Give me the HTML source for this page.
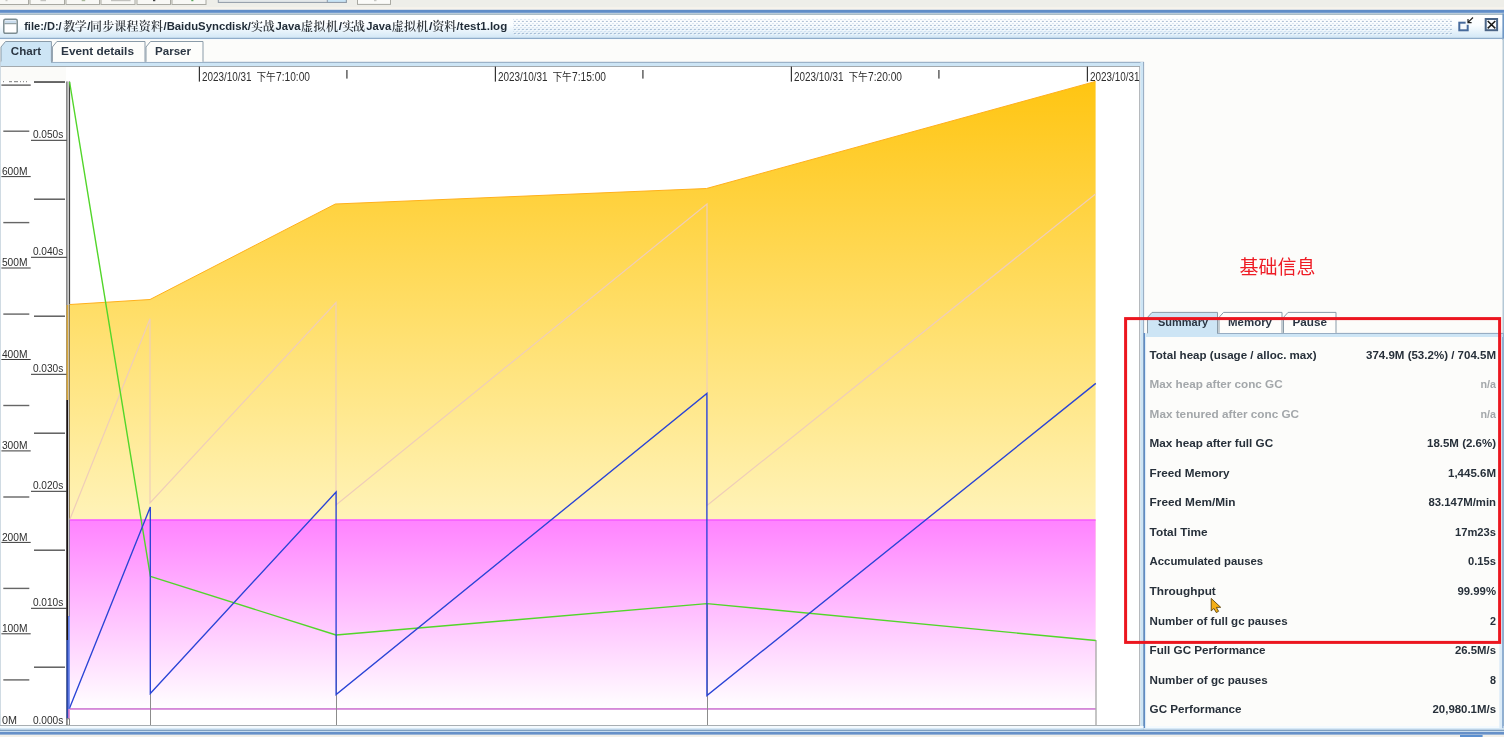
<!DOCTYPE html>
<html lang="zh"><head><meta charset="utf-8"><title>GCViewer - test1.log</title>
<style>
html,body{margin:0;padding:0;background:#fcfcfa;overflow:hidden}
body{width:1504px;height:737px;position:relative;font-family:"Liberation Sans","Noto Sans CJK SC",sans-serif}
svg{position:absolute;left:0;top:0;display:block;will-change:transform}
</style></head><body>

<svg width="1504" height="737" viewBox="0 0 1504 737">
<defs>
<linearGradient id="gTitle" x1="0" y1="0" x2="0" y2="1"><stop offset="0" stop-color="#ffffff"/><stop offset="0.45" stop-color="#fafdff"/><stop offset="1" stop-color="#d2e7f6"/></linearGradient>
<linearGradient id="gOrange" gradientUnits="userSpaceOnUse" x1="0" y1="81" x2="0" y2="709"><stop offset="0" stop-color="#ffc512"/><stop offset="0.352" stop-color="#ffdd64"/><stop offset="0.696" stop-color="#fff3b8"/><stop offset="1" stop-color="#ffffff"/></linearGradient>
<linearGradient id="gPink" gradientUnits="userSpaceOnUse" x1="0" y1="519" x2="0" y2="709"><stop offset="0" stop-color="#ff82ff"/><stop offset="1" stop-color="#ffffff"/></linearGradient>
<pattern id="bumps" x="511.5" y="18" width="4" height="4" patternUnits="userSpaceOnUse">
<rect x="0" y="0" width="1" height="1" fill="#ffffff"/><rect x="0.9" y="0.9" width="1.2" height="1.2" fill="#c2d3e6"/>
<rect x="2" y="2" width="1" height="1" fill="#ffffff"/><rect x="2.85" y="2.85" width="1.3" height="1.3" fill="#7a96b8"/>
</pattern>
</defs>
<rect x="0" y="0" width="1504" height="737" fill="#fcfcfa"/>
<rect x="0" y="0" width="1504" height="10" fill="#eeeee9"/>
<rect x="0" y="7.2" width="1504" height="2.6" fill="#f7f3ec"/>
<rect x="-6" y="-6" width="34.5" height="10.5" fill="#f8f8f5" stroke="#a9a9a2" stroke-width="1"/>
<rect x="30" y="-6" width="34.5" height="10.5" fill="#f8f8f5" stroke="#a9a9a2" stroke-width="1"/>
<rect x="66" y="-6" width="33.5" height="10.5" fill="#f8f8f5" stroke="#a9a9a2" stroke-width="1"/>
<rect x="101" y="-6" width="34" height="10.5" fill="#f8f8f5" stroke="#a9a9a2" stroke-width="1"/>
<rect x="137" y="-6" width="33.5" height="10.5" fill="#f8f8f5" stroke="#a9a9a2" stroke-width="1"/>
<rect x="172" y="-6" width="34" height="10.5" fill="#f8f8f5" stroke="#a9a9a2" stroke-width="1"/>
<rect x="218.3" y="-6" width="128" height="8.4" fill="#e4e8ea" stroke="#8f9aa6" stroke-width="1"/>
<rect x="327.3" y="-6" width="19" height="8.4" fill="#c8e4f6" stroke="#8f9aa6" stroke-width="1"/>
<rect x="357.5" y="-6" width="33" height="10.4" fill="#fbfbf9" stroke="#a9a9a2" stroke-width="1"/>
<rect x="5.5" y="0" width="2" height="1.2" fill="#c8c8c4"/>
<rect x="40.5" y="0" width="5.5" height="1.2" fill="#c4c4c0"/>
<rect x="81.7" y="0" width="3.5" height="1.2" fill="#a9b89a"/>
<rect x="111" y="0" width="19.6" height="1.2" fill="#c2c2be"/>
<rect x="153" y="0" width="2.3" height="1.2" fill="#444444"/>
<rect x="191.3" y="0" width="2.1" height="1.2" fill="#58a858"/>
<rect x="374" y="0" width="2.5" height="1.2" fill="#c8c8c4"/>
<rect x="0" y="9.8" width="1504" height="3.1" fill="#608dc8"/>
<rect x="0" y="12.9" width="1504" height="0.8" fill="#c4d8ea"/>
<rect x="0" y="13.6" width="1504" height="1.3" fill="#96acb8"/>
<rect x="0" y="14.9" width="1504" height="23" fill="url(#gTitle)"/>
<rect x="0" y="37.8" width="1504" height="1.1" fill="#7799bf"/>
<rect x="0" y="38.9" width="1504" height="1" fill="#f6fafd"/>
<rect x="513" y="18" width="939" height="17" fill="url(#bumps)"/>
<rect x="3.8" y="19.3" width="13.4" height="14" rx="1.5" fill="#ffffff" stroke="#7d8d92" stroke-width="1.5"/>
<rect x="5" y="20.5" width="11" height="2.6" fill="#c9dced"/>
<rect x="4.5" y="23.2" width="12" height="1" fill="#7d8d92"/>
<text y="30.3" font-size="11.8" font-weight="bold" fill="#1f2a36" font-family='"Liberation Sans", "Noto Serif CJK SC", sans-serif'><tspan x="24.2" y="30.3" textLength="37.5" lengthAdjust="spacingAndGlyphs">file:/D:/</tspan><tspan x="63.3" y="30.9" font-size="12" font-weight="600" fill="#30353b" textLength="23.4" lengthAdjust="spacing">教学</tspan><tspan x="87.2" y="30.3" textLength="3.2" lengthAdjust="spacingAndGlyphs">/</tspan><tspan x="89.9" y="30.9" font-size="12" font-weight="600" fill="#30353b" textLength="73.2" lengthAdjust="spacing">同步课程资料</tspan><tspan x="163.5" y="30.3" textLength="87.5" lengthAdjust="spacingAndGlyphs">/BaiduSyncdisk/</tspan><tspan x="251.0" y="30.9" font-size="12" font-weight="600" fill="#30353b" textLength="23.8" lengthAdjust="spacing">实战</tspan><tspan x="275.4" y="30.3" textLength="25.1" lengthAdjust="spacingAndGlyphs">Java</tspan><tspan x="301.0" y="30.9" font-size="12" font-weight="600" fill="#30353b" textLength="37.1" lengthAdjust="spacing">虚拟机</tspan><tspan x="338.7" y="30.3" textLength="3.3" lengthAdjust="spacingAndGlyphs">/</tspan><tspan x="342.3" y="30.9" font-size="12" font-weight="600" fill="#30353b" textLength="22.8" lengthAdjust="spacing">实战</tspan><tspan x="366.3" y="30.3" textLength="24.9" lengthAdjust="spacingAndGlyphs">Java</tspan><tspan x="391.8" y="30.9" font-size="12" font-weight="600" fill="#30353b" textLength="36.5" lengthAdjust="spacing">虚拟机</tspan><tspan x="429" y="30.3" textLength="3.5" lengthAdjust="spacingAndGlyphs">/</tspan><tspan x="432.2" y="30.9" font-size="12" font-weight="600" fill="#30353b" textLength="24.1" lengthAdjust="spacing">资料</tspan><tspan x="456.6" y="30.3" textLength="50.6" lengthAdjust="spacingAndGlyphs">/test1.log</tspan></text>
<rect x="1459.3" y="22.7" width="8.4" height="7.6" fill="#f4f9fd" stroke="#466a9c" stroke-width="2"/>
<rect x="1465.6" y="20.4" width="4.6" height="4.4" fill="#f2f8fc"/>
<path d="M1473 17.5 L1468.3 22.2 M1468 19 L1468 22.6 L1471.6 22.6" stroke="#222" stroke-width="1.2" fill="none"/>
<rect x="1485.7" y="19" width="11.4" height="11.2" fill="#f8fbfe" stroke="#4a6486" stroke-width="2"/>
<path d="M1487.7 21 L1495.3 28.4 M1495.3 21 L1487.7 28.4" stroke="#1a1a1a" stroke-width="1.5" fill="none"/>
<rect x="1502.4" y="13.5" width="1.6" height="25" fill="#6f98c6"/>
<rect x="1502" y="38.8" width="2" height="690" fill="#b4c8d6"/>
<rect x="0" y="62" width="1144" height="4" fill="#cde5f5"/>
<rect x="51" y="61.8" width="1093" height="1" fill="#8fa6bd"/>
<path d="M1 62.2 L1 47.0 L5.5 41.5 L51.4 41.5 L51.4 62.2 Z" fill="#cde5f5"/>
<path d="M1 62.2 L1 47.0 L5.5 41.5 L51.4 41.5 L51.4 62.2" fill="none" stroke="#8a9ba8" stroke-width="1"/>
<text x="10.8" y="54.5" font-size="11.6" font-weight="bold" fill="#2b3643" font-family='"Liberation Sans", "Noto Sans CJK SC", sans-serif' textLength="30.2" lengthAdjust="spacingAndGlyphs" >Chart</text>
<path d="M52.4 61.8 L52.4 47.0 L56.9 41.5 L145 41.5 L145 61.8 Z" fill="#fdfdfb"/>
<path d="M52.4 61.8 L52.4 47.0 L56.9 41.5 L145 41.5 L145 61.8" fill="none" stroke="#8a9ba8" stroke-width="1"/>
<text x="61" y="54.5" font-size="11.6" font-weight="bold" fill="#2b3643" font-family='"Liberation Sans", "Noto Sans CJK SC", sans-serif' textLength="73" lengthAdjust="spacingAndGlyphs" >Event details</text>
<path d="M146 61.8 L146 47.0 L150.5 41.5 L203 41.5 L203 61.8 Z" fill="#fdfdfb"/>
<path d="M146 61.8 L146 47.0 L150.5 41.5 L203 41.5 L203 61.8" fill="none" stroke="#8a9ba8" stroke-width="1"/>
<text x="155" y="54.5" font-size="11.6" font-weight="bold" fill="#2b3643" font-family='"Liberation Sans", "Noto Sans CJK SC", sans-serif' textLength="36" lengthAdjust="spacingAndGlyphs" >Parser</text>
<rect x="1.5" y="61" width="49.4" height="3" fill="#cde5f5"/>
<rect x="0" y="66" width="1140" height="660" fill="#ffffff"/>
<rect x="0" y="66" width="1140" height="1" fill="#a3a9ad"/>
<rect x="1139.2" y="66" width="1" height="660" fill="#a3a9ad"/>
<rect x="1140.5" y="62" width="3" height="668" fill="#cde5f5"/>
<rect x="1143.2" y="62" width="1" height="668" fill="#8aa0b8"/>
<rect x="0" y="62" width="0.8" height="668" fill="#c5d2dc"/>
<rect x="1" y="67" width="65" height="14" fill="#fbfbf9"/>
<text x="2" y="724" font-size="11.4" font-weight="normal" fill="#2e2e2e" font-family='"Liberation Sans", "Noto Sans CJK SC", sans-serif' textLength="15" lengthAdjust="spacingAndGlyphs" >0M</text>
<rect x="3.3" y="679.2" width="26" height="1.4" fill="#666"/>
<text x="1.9" y="631.9" font-size="11.4" font-weight="normal" fill="#2e2e2e" font-family='"Liberation Sans", "Noto Sans CJK SC", sans-serif' textLength="25.6" lengthAdjust="spacingAndGlyphs" >100M</text>
<rect x="1.4" y="633.3" width="29.3" height="1" fill="#3a3a3a"/>
<rect x="3.3" y="587.7" width="26" height="1.4" fill="#666"/>
<text x="1.9" y="540.5" font-size="11.4" font-weight="normal" fill="#2e2e2e" font-family='"Liberation Sans", "Noto Sans CJK SC", sans-serif' textLength="25.6" lengthAdjust="spacingAndGlyphs" >200M</text>
<rect x="1.4" y="541.9" width="29.3" height="1" fill="#3a3a3a"/>
<rect x="3.3" y="496.3" width="26" height="1.4" fill="#666"/>
<text x="1.9" y="449.0" font-size="11.4" font-weight="normal" fill="#2e2e2e" font-family='"Liberation Sans", "Noto Sans CJK SC", sans-serif' textLength="25.6" lengthAdjust="spacingAndGlyphs" >300M</text>
<rect x="1.4" y="450.4" width="29.3" height="1" fill="#3a3a3a"/>
<rect x="3.3" y="404.8" width="26" height="1.4" fill="#666"/>
<text x="1.9" y="357.6" font-size="11.4" font-weight="normal" fill="#2e2e2e" font-family='"Liberation Sans", "Noto Sans CJK SC", sans-serif' textLength="25.6" lengthAdjust="spacingAndGlyphs" >400M</text>
<rect x="1.4" y="359.0" width="29.3" height="1" fill="#3a3a3a"/>
<rect x="3.3" y="313.4" width="26" height="1.4" fill="#666"/>
<text x="1.9" y="266.1" font-size="11.4" font-weight="normal" fill="#2e2e2e" font-family='"Liberation Sans", "Noto Sans CJK SC", sans-serif' textLength="25.6" lengthAdjust="spacingAndGlyphs" >500M</text>
<rect x="1.4" y="267.5" width="29.3" height="1" fill="#3a3a3a"/>
<rect x="3.3" y="221.9" width="26" height="1.4" fill="#666"/>
<text x="1.9" y="174.7" font-size="11.4" font-weight="normal" fill="#2e2e2e" font-family='"Liberation Sans", "Noto Sans CJK SC", sans-serif' textLength="25.6" lengthAdjust="spacingAndGlyphs" >600M</text>
<rect x="1.4" y="176.1" width="29.3" height="1" fill="#3a3a3a"/>
<rect x="3.3" y="130.5" width="26" height="1.4" fill="#666"/>
<rect x="1.4" y="84.5" width="29.3" height="1.2" fill="#444"/>
<text x="32.9" y="724" font-size="11.4" font-weight="normal" fill="#2e2e2e" font-family='"Liberation Sans", "Noto Sans CJK SC", sans-serif' textLength="30.4" lengthAdjust="spacingAndGlyphs" >0.000s</text>
<rect x="34" y="666.5" width="31" height="1.4" fill="#555"/>
<text x="32.9" y="606.1" font-size="11.4" font-weight="normal" fill="#2e2e2e" font-family='"Liberation Sans", "Noto Sans CJK SC", sans-serif' textLength="30.4" lengthAdjust="spacingAndGlyphs" >0.010s</text>
<rect x="31" y="607.8" width="36" height="1" fill="#333"/>
<rect x="34" y="549.5" width="31" height="1.4" fill="#555"/>
<text x="32.9" y="489.1" font-size="11.4" font-weight="normal" fill="#2e2e2e" font-family='"Liberation Sans", "Noto Sans CJK SC", sans-serif' textLength="30.4" lengthAdjust="spacingAndGlyphs" >0.020s</text>
<rect x="31" y="490.8" width="36" height="1" fill="#333"/>
<rect x="34" y="432.5" width="31" height="1.4" fill="#555"/>
<text x="32.9" y="372.1" font-size="11.4" font-weight="normal" fill="#2e2e2e" font-family='"Liberation Sans", "Noto Sans CJK SC", sans-serif' textLength="30.4" lengthAdjust="spacingAndGlyphs" >0.030s</text>
<rect x="31" y="373.8" width="36" height="1" fill="#333"/>
<rect x="34" y="315.5" width="31" height="1.4" fill="#555"/>
<text x="32.9" y="255.1" font-size="11.4" font-weight="normal" fill="#2e2e2e" font-family='"Liberation Sans", "Noto Sans CJK SC", sans-serif' textLength="30.4" lengthAdjust="spacingAndGlyphs" >0.040s</text>
<rect x="31" y="256.8" width="36" height="1" fill="#333"/>
<rect x="34" y="198.5" width="31" height="1.4" fill="#555"/>
<text x="32.9" y="138.1" font-size="11.4" font-weight="normal" fill="#2e2e2e" font-family='"Liberation Sans", "Noto Sans CJK SC", sans-serif' textLength="30.4" lengthAdjust="spacingAndGlyphs" >0.050s</text>
<rect x="31" y="139.8" width="36" height="1" fill="#333"/>
<rect x="34" y="81.5" width="31" height="1.4" fill="#555"/>
<rect x="34" y="81.1" width="31" height="1.5" fill="#666"/>
<rect x="3" y="81.2" width="1" height="1" fill="#777"/>
<rect x="9" y="81.2" width="3" height="1" fill="#777"/>
<rect x="14" y="81.2" width="4" height="1" fill="#777"/>
<rect x="20" y="81.2" width="1" height="1" fill="#777"/>
<rect x="23" y="81.2" width="1" height="1" fill="#777"/>
<rect x="26" y="81.2" width="1" height="1" fill="#777"/>
<rect x="66.3" y="81.5" width="1.3" height="644" fill="#5a5a5a"/>
<rect x="67.6" y="81.5" width="1.4" height="644" fill="#c9c9c9"/>
<rect x="69" y="81.5" width="1.1" height="223" fill="#444"/>
<rect x="69" y="304.5" width="1.1" height="215" fill="#8f7d4e"/>
<rect x="69" y="519.5" width="1.1" height="97" fill="#8a7a9a"/>
<rect x="198.8" y="66.6" width="1.2" height="15" fill="#333"/>
<text y="80.6" font-size="12" fill="#2e2e2e" font-family='"Liberation Sans", "Noto Sans CJK SC", sans-serif'><tspan x="202.0" textLength="49.6" lengthAdjust="spacingAndGlyphs">2023/10/31</tspan><tspan x="256.4" font-size="11.4" textLength="19.4" lengthAdjust="spacingAndGlyphs">下午</tspan><tspan x="276.0" textLength="34" lengthAdjust="spacingAndGlyphs">7:10:00</tspan></text>
<rect x="346.2" y="70" width="1.4" height="8.6" fill="#555"/>
<rect x="494.79999999999995" y="66.6" width="1.2" height="15" fill="#333"/>
<text y="80.6" font-size="12" fill="#2e2e2e" font-family='"Liberation Sans", "Noto Sans CJK SC", sans-serif'><tspan x="498.0" textLength="49.6" lengthAdjust="spacingAndGlyphs">2023/10/31</tspan><tspan x="552.4" font-size="11.4" textLength="19.4" lengthAdjust="spacingAndGlyphs">下午</tspan><tspan x="572.0" textLength="34" lengthAdjust="spacingAndGlyphs">7:15:00</tspan></text>
<rect x="642.1999999999999" y="70" width="1.4" height="8.6" fill="#555"/>
<rect x="790.8" y="66.6" width="1.2" height="15" fill="#333"/>
<text y="80.6" font-size="12" fill="#2e2e2e" font-family='"Liberation Sans", "Noto Sans CJK SC", sans-serif'><tspan x="794.0" textLength="49.6" lengthAdjust="spacingAndGlyphs">2023/10/31</tspan><tspan x="848.4" font-size="11.4" textLength="19.4" lengthAdjust="spacingAndGlyphs">下午</tspan><tspan x="868.0" textLength="34" lengthAdjust="spacingAndGlyphs">7:20:00</tspan></text>
<rect x="938.1999999999999" y="70" width="1.4" height="8.6" fill="#555"/>
<rect x="1086.8000000000002" y="66.6" width="1.2" height="15" fill="#333"/>
<text y="80.6" font-size="12" fill="#2e2e2e" font-family='"Liberation Sans", "Noto Sans CJK SC", sans-serif'><tspan x="1090.0" textLength="49.6" lengthAdjust="spacingAndGlyphs">2023/10/31</tspan></text>
<path d="M70 304.5 L150 299.5 L335.3 204 L706.5 188.5 L1095.6 81.4 L1095.6 709 L70 709 Z" fill="url(#gOrange)"/>
<path d="M70 304.5 L150 299.5 L335.3 204 L706.5 188.5 L1095.6 81.4" fill="none" stroke="#ffb01c" stroke-width="1"/>
<rect x="70" y="519.4" width="1025.6" height="189.6" fill="url(#gPink)"/>
<rect x="70" y="519.4" width="1025.6" height="1.4" fill="#f65cff"/>
<rect x="70" y="708.3" width="1025.6" height="1.3" fill="#c458c8"/>
<path d="M70 519 L150 318.7 L150 503 L336 302.5 L336 505 L707 204 L707 505.5 L1095.5 194" fill="none" stroke="#efcdb9" stroke-width="1.2"/>
<rect x="150.0" y="577" width="1" height="148.5" fill="#8c8c8c"/>
<rect x="336.0" y="635" width="1" height="90.5" fill="#8c8c8c"/>
<rect x="707.0" y="603" width="1" height="122.5" fill="#8c8c8c"/>
<rect x="1095.5" y="640" width="1" height="85.5" fill="#8c8c8c"/>
<path d="M69.6 82 L150.4 576.4 L336 635 L707 603.6 L1095.8 640.5" fill="none" stroke="#52d62a" stroke-width="1.4" stroke-linejoin="round"/>
<path d="M69.4 708.5 L150.3 507 L150.3 693.4 L336.1 492 L336.1 694.6 L706.9 393.4 L706.9 695.5 L1095.8 383.4" fill="none" stroke="#2a44d6" stroke-width="1.35"/>
<rect x="66.5" y="305" width="1.7" height="95" fill="#d9a83c"/>
<rect x="66.5" y="400" width="1.5" height="240" fill="#1a1212"/>
<rect x="66.5" y="640" width="1.7" height="78.5" fill="#2a4ab0"/>
<rect x="68.2" y="616" width="1.5" height="93" fill="#4a68e8"/>
<rect x="68.2" y="709" width="1.5" height="9.5" fill="#cc6ccc"/>
<rect x="67.2" y="718.8" width="2.3" height="6.4" fill="#ffffff" stroke="#777" stroke-width="0.9"/>
<rect x="0" y="725" width="1140" height="1" fill="#a8aeb2"/>
<rect x="0" y="726" width="1504" height="2.3" fill="#f4fafe"/>
<rect x="0" y="728.3" width="1504" height="1.4" fill="#c8e2f4"/>
<rect x="0" y="729.7" width="1504" height="1.3" fill="#7f9fc0"/>
<rect x="0" y="731" width="1504" height="0.8" fill="#d8eaf8"/>
<rect x="0" y="731.8" width="1504" height="3" fill="#6690c8"/>
<rect x="0" y="734.8" width="1504" height="2.2" fill="#f1efe9"/>
<rect x="1460" y="735" width="22.6" height="2" fill="#5a8fd0"/>
<rect x="1144.5" y="39.9" width="358" height="686" fill="#fcfcfa"/>
<rect x="1143.6" y="333" width="1.5" height="395" fill="#5f8cc4"/>
<rect x="1145.1" y="333" width="1" height="395" fill="#dcecf8"/>
<rect x="1499.3" y="333" width="3.2" height="395" fill="#dcecf8"/>
<rect x="1502.4" y="333" width="1" height="395" fill="#5f8cc4"/>
<text x="1239.5" y="273.5" font-size="19" font-weight="normal" fill="#ee1c25" font-family='"Liberation Sans", "Noto Sans CJK SC", sans-serif' textLength="76" lengthAdjust="spacingAndGlyphs" >基础信息</text>
<rect x="1145.8" y="333.4" width="357" height="3.6" fill="#cde5f5"/>
<rect x="1217" y="332.9" width="286" height="1" fill="#8fa6bd"/>
<path d="M1147.5 333.4 L1147.5 317.4 L1152.0 312.4 L1217.5 312.4 L1217.5 333.4 Z" fill="#cde5f5"/>
<path d="M1147.5 333.4 L1147.5 317.4 L1152.0 312.4 L1217.5 312.4 L1217.5 333.4" fill="none" stroke="#8a9ba8" stroke-width="1"/>
<text x="1158" y="326.0" font-size="11.6" font-weight="bold" fill="#2b3643" font-family='"Liberation Sans", "Noto Sans CJK SC", sans-serif' textLength="50" lengthAdjust="spacingAndGlyphs" >Summary</text>
<path d="M1219 332.9 L1219 317.4 L1223.5 312.4 L1282 312.4 L1282 332.9 Z" fill="#fdfdfb"/>
<path d="M1219 332.9 L1219 317.4 L1223.5 312.4 L1282 312.4 L1282 332.9" fill="none" stroke="#8a9ba8" stroke-width="1"/>
<text x="1228" y="326.0" font-size="11.6" font-weight="bold" fill="#2b3643" font-family='"Liberation Sans", "Noto Sans CJK SC", sans-serif' textLength="44" lengthAdjust="spacingAndGlyphs" >Memory</text>
<path d="M1283.5 332.9 L1283.5 317.4 L1288.0 312.4 L1336 312.4 L1336 332.9 Z" fill="#fdfdfb"/>
<path d="M1283.5 332.9 L1283.5 317.4 L1288.0 312.4 L1336 312.4 L1336 332.9" fill="none" stroke="#8a9ba8" stroke-width="1"/>
<text x="1292.5" y="326.0" font-size="11.6" font-weight="bold" fill="#2b3643" font-family='"Liberation Sans", "Noto Sans CJK SC", sans-serif' textLength="34.5" lengthAdjust="spacingAndGlyphs" >Pause</text>
<rect x="1148" y="332.4" width="69" height="3" fill="#cde5f5"/>
<text x="1149.6" y="358.6" font-size="11.5" font-weight="bold" fill="#27303a" font-family='"Liberation Sans", "Noto Sans CJK SC", sans-serif' textLength="167" lengthAdjust="spacingAndGlyphs" >Total heap (usage / alloc. max)</text>
<text x="1496" y="358.6" font-size="11.5" font-weight="bold" fill="#27303a" font-family='"Liberation Sans", "Noto Sans CJK SC", sans-serif' text-anchor="end" textLength="130" lengthAdjust="spacingAndGlyphs" >374.9M (53.2%) / 704.5M</text>
<text x="1149.6" y="388.1" font-size="11.5" font-weight="bold" fill="#a3a7aa" font-family='"Liberation Sans", "Noto Sans CJK SC", sans-serif' textLength="133" lengthAdjust="spacingAndGlyphs" >Max heap after conc GC</text>
<text x="1496" y="388.1" font-size="11.5" font-weight="bold" fill="#a3a7aa" font-family='"Liberation Sans", "Noto Sans CJK SC", sans-serif' text-anchor="end" textLength="15.5" lengthAdjust="spacingAndGlyphs" >n/a</text>
<text x="1149.6" y="417.7" font-size="11.5" font-weight="bold" fill="#a3a7aa" font-family='"Liberation Sans", "Noto Sans CJK SC", sans-serif' textLength="149.5" lengthAdjust="spacingAndGlyphs" >Max tenured after conc GC</text>
<text x="1496" y="417.7" font-size="11.5" font-weight="bold" fill="#a3a7aa" font-family='"Liberation Sans", "Noto Sans CJK SC", sans-serif' text-anchor="end" textLength="15.5" lengthAdjust="spacingAndGlyphs" >n/a</text>
<text x="1149.6" y="447.2" font-size="11.5" font-weight="bold" fill="#27303a" font-family='"Liberation Sans", "Noto Sans CJK SC", sans-serif' textLength="123.5" lengthAdjust="spacingAndGlyphs" >Max heap after full GC</text>
<text x="1496" y="447.2" font-size="11.5" font-weight="bold" fill="#27303a" font-family='"Liberation Sans", "Noto Sans CJK SC", sans-serif' text-anchor="end" textLength="69" lengthAdjust="spacingAndGlyphs" >18.5M (2.6%)</text>
<text x="1149.6" y="476.8" font-size="11.5" font-weight="bold" fill="#27303a" font-family='"Liberation Sans", "Noto Sans CJK SC", sans-serif' textLength="80" lengthAdjust="spacingAndGlyphs" >Freed Memory</text>
<text x="1496" y="476.8" font-size="11.5" font-weight="bold" fill="#27303a" font-family='"Liberation Sans", "Noto Sans CJK SC", sans-serif' text-anchor="end" textLength="48" lengthAdjust="spacingAndGlyphs" >1,445.6M</text>
<text x="1149.6" y="506.3" font-size="11.5" font-weight="bold" fill="#27303a" font-family='"Liberation Sans", "Noto Sans CJK SC", sans-serif' textLength="86" lengthAdjust="spacingAndGlyphs" >Freed Mem/Min</text>
<text x="1496" y="506.3" font-size="11.5" font-weight="bold" fill="#27303a" font-family='"Liberation Sans", "Noto Sans CJK SC", sans-serif' text-anchor="end" textLength="67.5" lengthAdjust="spacingAndGlyphs" >83.147M/min</text>
<text x="1149.6" y="535.8" font-size="11.5" font-weight="bold" fill="#27303a" font-family='"Liberation Sans", "Noto Sans CJK SC", sans-serif' textLength="58" lengthAdjust="spacingAndGlyphs" >Total Time</text>
<text x="1496" y="535.8" font-size="11.5" font-weight="bold" fill="#27303a" font-family='"Liberation Sans", "Noto Sans CJK SC", sans-serif' text-anchor="end" textLength="41" lengthAdjust="spacingAndGlyphs" >17m23s</text>
<text x="1149.6" y="565.4" font-size="11.5" font-weight="bold" fill="#27303a" font-family='"Liberation Sans", "Noto Sans CJK SC", sans-serif' textLength="113.5" lengthAdjust="spacingAndGlyphs" >Accumulated pauses</text>
<text x="1496" y="565.4" font-size="11.5" font-weight="bold" fill="#27303a" font-family='"Liberation Sans", "Noto Sans CJK SC", sans-serif' text-anchor="end" textLength="28" lengthAdjust="spacingAndGlyphs" >0.15s</text>
<text x="1149.6" y="594.9" font-size="11.5" font-weight="bold" fill="#27303a" font-family='"Liberation Sans", "Noto Sans CJK SC", sans-serif' textLength="66.2" lengthAdjust="spacingAndGlyphs" >Throughput</text>
<text x="1496" y="594.9" font-size="11.5" font-weight="bold" fill="#27303a" font-family='"Liberation Sans", "Noto Sans CJK SC", sans-serif' text-anchor="end" textLength="38.5" lengthAdjust="spacingAndGlyphs" >99.99%</text>
<text x="1149.6" y="624.5" font-size="11.5" font-weight="bold" fill="#27303a" font-family='"Liberation Sans", "Noto Sans CJK SC", sans-serif' textLength="138" lengthAdjust="spacingAndGlyphs" >Number of full gc pauses</text>
<text x="1496" y="624.5" font-size="11.5" font-weight="bold" fill="#27303a" font-family='"Liberation Sans", "Noto Sans CJK SC", sans-serif' text-anchor="end" textLength="6" lengthAdjust="spacingAndGlyphs" >2</text>
<text x="1149.6" y="654.0" font-size="11.5" font-weight="bold" fill="#27303a" font-family='"Liberation Sans", "Noto Sans CJK SC", sans-serif' textLength="116" lengthAdjust="spacingAndGlyphs" >Full GC Performance</text>
<text x="1496" y="654.0" font-size="11.5" font-weight="bold" fill="#27303a" font-family='"Liberation Sans", "Noto Sans CJK SC", sans-serif' text-anchor="end" textLength="41" lengthAdjust="spacingAndGlyphs" >26.5M/s</text>
<text x="1149.6" y="683.5" font-size="11.5" font-weight="bold" fill="#27303a" font-family='"Liberation Sans", "Noto Sans CJK SC", sans-serif' textLength="118.2" lengthAdjust="spacingAndGlyphs" >Number of gc pauses</text>
<text x="1496" y="683.5" font-size="11.5" font-weight="bold" fill="#27303a" font-family='"Liberation Sans", "Noto Sans CJK SC", sans-serif' text-anchor="end" textLength="6" lengthAdjust="spacingAndGlyphs" >8</text>
<text x="1149.6" y="713.1" font-size="11.5" font-weight="bold" fill="#27303a" font-family='"Liberation Sans", "Noto Sans CJK SC", sans-serif' textLength="92" lengthAdjust="spacingAndGlyphs" >GC Performance</text>
<text x="1496" y="713.1" font-size="11.5" font-weight="bold" fill="#27303a" font-family='"Liberation Sans", "Noto Sans CJK SC", sans-serif' text-anchor="end" textLength="63.5" lengthAdjust="spacingAndGlyphs" >20,980.1M/s</text>
<rect x="1125.6" y="318.6" width="374" height="323.8" fill="none" stroke="#ec161f" stroke-width="3"/>
<path d="M1211.2 598.4 L1211.2 610.9 L1213.9 608.5 L1216.3 612.6 L1218.6 611.3 L1216.4 607.4 L1220.7 607.3 Z" fill="#f4ae14" stroke="#4a3400" stroke-width="0.8" stroke-linejoin="round"/>
</svg>
</body></html>
